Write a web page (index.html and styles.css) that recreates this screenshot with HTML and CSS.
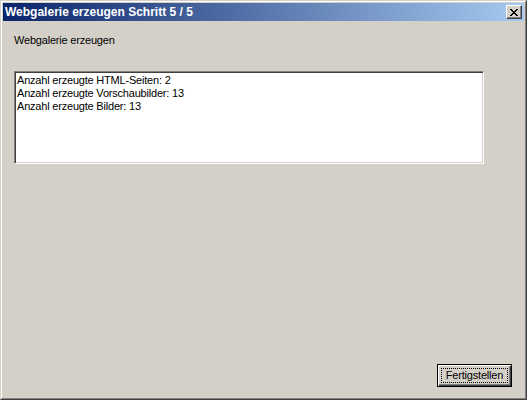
FILE: index.html
```html
<!DOCTYPE html>
<html>
<head>
<meta charset="utf-8">
<link rel="stylesheet" href="styles.css">
</head>
<body>
<div class="window">
  <div class="frame">
    <div class="titlebar">
      <span class="title">Webgalerie erzeugen Schritt 5 / 5</span>
      <button class="close" aria-label="Schließen">
        <svg width="8" height="7" viewBox="0 0 8 7"><path d="M0 0h2v1h1v1h2v-1h1v-1h2v1h-1v1h-1v1h-1v1h1v1h1v1h1v1h-2v-1h-1v-1h-2v1h-1v1h-2v-1h1v-1h1v-1h1v-1h-1v-1h-1v-1h-1z" fill="#000"/></svg>
      </button>
    </div>
    <div class="client">
      <div class="label">Webgalerie erzeugen</div>
      <div class="textbox">
        <div class="line">Anzahl erzeugte HTML-Seiten: 2</div>
        <div class="line">Anzahl erzeugte Vorschaubilder: 13</div>
        <div class="line">Anzahl erzeugte Bilder: 13</div>
      </div>
      <div class="spacer"></div>
      <div class="actions">
        <button class="btn"><span class="focus">Fertigstellen</span></button>
      </div>
    </div>
  </div>
</div>
</body>
</html>
```

FILE: styles.css
```css
html, body {
  margin: 0;
  padding: 0;
  background: #d4d0c8;
}
.window {
  width: 527px;
  height: 400px;
  box-sizing: border-box;
  border: 1px solid;
  border-color: #d4d0c8 #404040 #404040 #d4d0c8;
  font-family: "Liberation Sans", Arial, sans-serif;
  font-size: 11px;
  letter-spacing: -0.2px;
  color: #000;
}
.frame {
  height: 100%;
  box-sizing: border-box;
  border: 1px solid;
  border-color: #ffffff #808080 #808080 #ffffff;
  padding: 1px;
  display: flex;
  flex-direction: column;
  background: #d4d0c8;
}
.titlebar {
  height: 18px;
  flex: none;
  background: linear-gradient(to right, #0a246a, #a6caf0);
  display: flex;
  align-items: center;
  padding: 0 2px 0 2px;
}
.title {
  flex: 1;
  color: #fff;
  font-weight: bold;
  font-size: 12px;
  letter-spacing: 0;
  line-height: 18px;
  white-space: nowrap;
}
.close {
  width: 16px;
  height: 14px;
  padding: 0;
  margin: 0;
  box-sizing: border-box;
  background: #d4d0c8;
  border: 1px solid;
  border-color: #ffffff #404040 #404040 #ffffff;
  box-shadow: inset -1px -1px 0 #808080;
  display: flex;
  align-items: center;
  justify-content: center;
}
.client {
  flex: 1;
  display: flex;
  flex-direction: column;
  padding: 13px 11px 10px 11px;
}
.label {
  line-height: 13px;
}
.textbox {
  margin-top: 24px;
  width: 470px;
  height: 93px;
  box-sizing: border-box;
  background: #fff;
  border: 1px solid;
  border-color: #808080 #ffffff #ffffff #808080;
  box-shadow: inset 1px 1px 0 #404040, inset -1px -1px 0 #d4d0c8;
  padding: 2px 2px;
}
.line {
  line-height: 13px;
  white-space: nowrap;
}
.spacer {
  flex: 1;
}
.actions {
  display: flex;
  justify-content: flex-end;
  padding-right: 1px;
}
.btn {
  width: 75px;
  height: 23px;
  box-sizing: border-box;
  margin: 0;
  padding: 3px;
  background: #d4d0c8;
  border: 1px solid #000;
  box-shadow: inset 1px 1px 0 #ffffff, inset -1px -1px 0 #404040, inset -2px -2px 0 #808080;
  font-family: "Liberation Sans", Arial, sans-serif;
  font-size: 11px;
  letter-spacing: -0.2px;
  color: #000;
  display: flex;
}
.focus {
  flex: 1;
  border: 1px dotted #000;
  display: flex;
  align-items: center;
  justify-content: center;
  line-height: 13px;
}
```
